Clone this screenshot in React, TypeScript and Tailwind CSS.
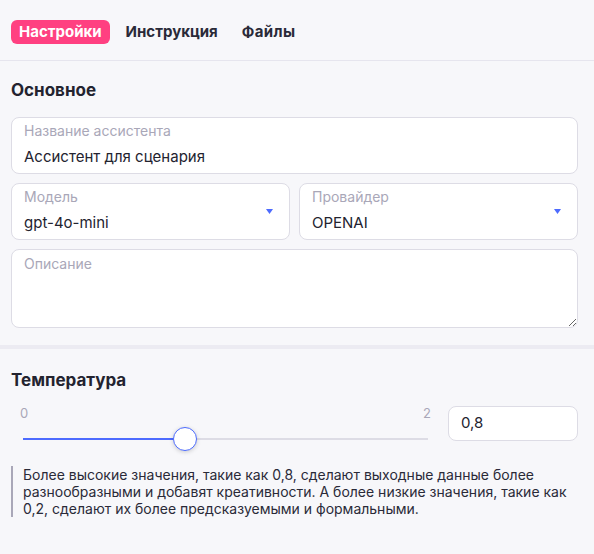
import { useState } from "react";

const FONT = "font-['Inter','Noto_Sans',sans-serif]";

function Caret() {
    return (
        <svg width="7" height="5" viewBox="0 0 7 5" className="shrink-0">
            <path d="M0 0h7L3.5 5z" fill="#4d6bfe" />
        </svg>
    );
}

function Field({ label, value, select }: { label: string; value: string; select?: boolean }) {
    return (
        <div className="flex-1 flex items-center h-[57px] rounded-lg border border-[#dddce5] bg-white pl-3 pr-4">
            <div className="flex-1 flex flex-col self-start pt-1">
                <span className="text-[14px] leading-[18px] text-[#a9a7b8]">{label}</span>
                <span className="mt-2 text-[15px] leading-[18px] text-[#23232f]">{value}</span>
            </div>
            {select && <Caret />}
        </div>
    );
}

export default function App() {
    const [temp] = useState(0.8);
    const pct = (temp / 2) * 100;

    return (
        <div className={`${FONT} w-[594px] h-[554px] bg-[#f7f7fa] text-[#23232f] overflow-hidden`}>
            {/* tabs */}
            <div className="flex items-center px-[11px] pt-5 pb-4 border-b border-[#e6e5ee]">
                <span className="h-6 px-2 flex items-center rounded-md bg-[#ff4081] text-white text-[15px] font-bold">Настройки</span>
                <span className="ml-4 text-[15px] font-bold text-[#2a2a38]">Инструкция</span>
                <span className="ml-6 text-[15px] font-bold tracking-[0.4px] text-[#2a2a38]">Файлы</span>
            </div>

            {/* basic settings */}
            <div className="pl-[11px] pr-4 pt-[17px] pb-[17px]">
                <h2 className="text-[17px] font-bold leading-6 mb-[15px]">Основное</h2>
                <div className="flex flex-col gap-[9px]">
                    <div className="flex">
                        <Field label="Название ассистента" value="Ассистент для сценария" />
                    </div>
                    <div className="flex gap-[9px]">
                        <Field label="Модель" value="gpt-4o-mini" select />
                        <Field label="Провайдер" value="OPENAI" select />
                    </div>
                    <textarea
                        placeholder="Описание"
                        className="h-[79px] rounded-lg border border-[#dddce5] bg-white px-3 pt-[5px] text-[14px] leading-[18px] placeholder:text-[#a9a7b8] outline-none resize-y"
                    />
                </div>
            </div>

            <div className="h-1 bg-[#ecebf2]" />

            {/* temperature */}
            <div className="pl-[11px] pr-4 pt-[19px]">
                <h2 className="text-[17px] font-bold leading-6">Температура</h2>
                <div className="flex items-start gap-5 mt-[13px]">
                    <div className="flex-1 pl-3">
                        <div className="flex justify-between text-[13px] leading-4 text-[#a9a7b8]">
                            <span className="-ml-[3px]">0</span>
                            <span className="-mr-[3px]">2</span>
                        </div>
                        <div className="relative h-6 mt-[6px] flex items-center">
                            <div className="h-[2px] w-full bg-[#dddce5]" />
                            <div className="absolute left-0 h-[2px] bg-[#4d6bfe]" style={{ width: `${pct}%` }} />
                            <div
                                className="absolute w-6 h-6 -ml-3 rounded-full bg-white border-[1.5px] border-[#4d6bfe] shadow-[0_1px_4px_rgba(0,0,0,0.18)]"
                                style={{ left: `${pct}%` }}
                            />
                        </div>
                    </div>
                    <div className="w-[130px] h-[35px] mt-px rounded-lg border border-[#dddce5] bg-white flex items-center px-3 text-[15px]">
                        0,8
                    </div>
                </div>
                <p className="mt-[15px] border-l-2 border-[#a9a7b8] pl-[10px] text-[14px] leading-[17px] text-[#2a2a38]">
                    Более высокие значения, такие как 0,8, сделают выходные данные более разнообразными и добавят креативности. А более низкие значения, такие как 0,2, сделают их более предсказуемыми и формальными.
                </p>
            </div>
        </div>
    );
}
